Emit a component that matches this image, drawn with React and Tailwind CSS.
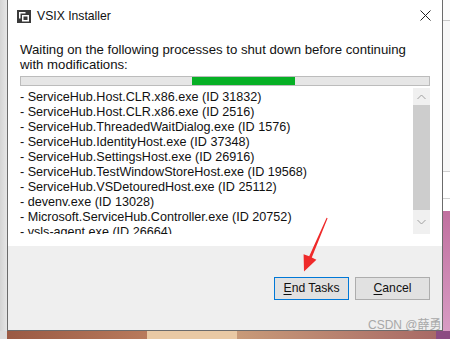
import React from "react";

const items = [
  "- ServiceHub.Host.CLR.x86.exe (ID 31832)",
  "- ServiceHub.Host.CLR.x86.exe (ID 2516)",
  "- ServiceHub.ThreadedWaitDialog.exe (ID 1576)",
  "- ServiceHub.IdentityHost.exe (ID 37348)",
  "- ServiceHub.SettingsHost.exe (ID 26916)",
  "- ServiceHub.TestWindowStoreHost.exe (ID 19568)",
  "- ServiceHub.VSDetouredHost.exe (ID 25112)",
  "- devenv.exe (ID 13028)",
  "- Microsoft.ServiceHub.Controller.exe (ID 20752)",
  "- vsls-agent.exe (ID 26664)",
];

const font = { fontFamily: '"Liberation Sans", "Noto Sans CJK SC", sans-serif' };

export default function App() {
  return (
    <div
      className="relative w-[450px] h-[339px] overflow-hidden flex flex-col text-[12px] text-black"
      style={font}
    >
      <div className="flex h-[331px]">
        {/* left desktop strip */}
        <div className="w-[7px] bg-gradient-to-r from-[#d4d4d4] to-[#e6e6e6]" />
        {/* window */}
        <div className="w-[436px] flex flex-col border-x border-b border-[#6b6b6b] bg-white">
          {/* title bar */}
          <div className="h-[30px] flex items-center pl-[9px] pr-[9px]">
            <svg width="14" height="13" viewBox="0 0 14 13" className="mt-[3px]">
              <rect x="0" y="0" width="14" height="13" fill="#3a3a3a" />
              <path d="M2 2 H8.5 V3.5 H3.5 V8.5 H2 Z" fill="#ffffff" />
              <rect x="5" y="5" width="7" height="6.5" fill="#ffffff" />
              <rect x="6.5" y="6.5" width="4" height="3.5" fill="#3a3a3a" />
            </svg>
            <span className="ml-[6px] mt-[2px] text-[12.2px] text-[#111]">VSIX Installer</span>
            <div className="flex-1" />
            <svg width="11" height="11" viewBox="0 0 11 11" className="mr-[2px]">
              <path d="M0.5 0.5 L10.5 10.5 M10.5 0.5 L0.5 10.5" stroke="#222" strokeWidth="1" />
            </svg>
          </div>
          {/* content */}
          <div className="flex flex-col px-[12px] pt-[13px] h-[216px]">
            <div className="text-[13.2px] leading-[14.7px] text-[#111]">
              Waiting on the following processes to shut down before continuing
              <br />
              with modifications:
            </div>
            <div className="mt-[4px] h-[10px] border border-[#bcbcbc] bg-[#e6e6e6] flex">
              <div className="w-[171px]" />
              <div className="w-[103px] bg-[#06b025]" />
            </div>
            <div className="mt-[2px] h-[146px] flex overflow-hidden">
              <div className="flex-1 overflow-hidden pt-[1.5px]">
                {items.map((t) => (
                  <div key={t} className="h-[15px] leading-[15px] text-[12.6px] whitespace-nowrap text-[#111]">
                    {t}
                  </div>
                ))}
              </div>
              <div className="w-[17px] flex flex-col bg-[#f0f0f0]">
                <div className="h-[17px] flex items-center justify-center">
                  <svg width="9" height="6" viewBox="0 0 9 6">
                    <path d="M0.5 5 L4.5 1 L8.5 5" fill="none" stroke="#a0a0a0" strokeWidth="1" />
                  </svg>
                </div>
                <div className="h-[105px] bg-[#cdcdcd]" />
                <div className="flex-1 flex items-center justify-center">
                  <svg width="9" height="6" viewBox="0 0 9 6">
                    <path d="M0.5 1 L4.5 5 L8.5 1" fill="none" stroke="#a0a0a0" strokeWidth="1" />
                  </svg>
                </div>
              </div>
            </div>
          </div>
          {/* bottom panel */}
          <div className="flex-1 bg-[#efefef] flex justify-end items-start pt-[31px] pr-[12px] gap-[6px]">
            <button className="w-[75px] h-[23px] border border-[#0078d7] bg-[#e1e1e1] text-[12.2px] text-[#111] leading-none">
              <span className="underline underline-offset-2">E</span>nd Tasks
            </button>
            <button className="w-[75px] h-[23px] border border-[#adadad] bg-[#e1e1e1] text-[12.2px] text-[#111] leading-none">
              <span className="underline underline-offset-2">C</span>ancel
            </button>
          </div>
        </div>
        {/* right desktop strip */}
        <div className="w-[7px] flex flex-col">
          <div className="h-[20px] bg-[#fbfbfb]" />
          <div className="h-[1px] bg-[#c8c8c8]" />
          <div className="h-[150px] bg-[#f7f7f7]" />
          <div className="h-[1px] bg-[#d0d0d0]" />
          <div className="h-[26px] bg-white" />
          <div className="h-[1px] bg-[#d0d0d0]" />
          <div className="h-[12px] bg-white" />
          <div className="flex-1 bg-gradient-to-b from-[#c0709f] to-[#d89cc4]" />
        </div>
      </div>
      <div className="h-[8px] flex">
        <div className="w-[7px] bg-[#dcdcdc]" />
        <div className="w-[140px] bg-gradient-to-r from-[#9a5a44] to-[#b87a5c]" />
        <div className="w-[90px] bg-[#e9c9a4]" />
        <div className="flex-1 bg-gradient-to-r from-[#c89a78] to-[#a86a66]" />
        <div className="w-[14px] bg-[#8c4c82]" />
      </div>
      {/* watermark */}
      <div className="absolute left-[368px] top-[316px] text-[12px] text-[#a8a8a8]">CSDN @薛勇</div>
      {/* red arrow annotation */}
      <svg className="absolute left-0 top-0" width="450" height="339" viewBox="0 0 450 339">
        <polygon
          points="327.6,218.2 311.8,257.4 316.4,259.8 304,271.5 303.6,254.2 309.2,256.2 326.6,217.8"
          fill="#ef2a2a"
        />
      </svg>
    </div>
  );
}
